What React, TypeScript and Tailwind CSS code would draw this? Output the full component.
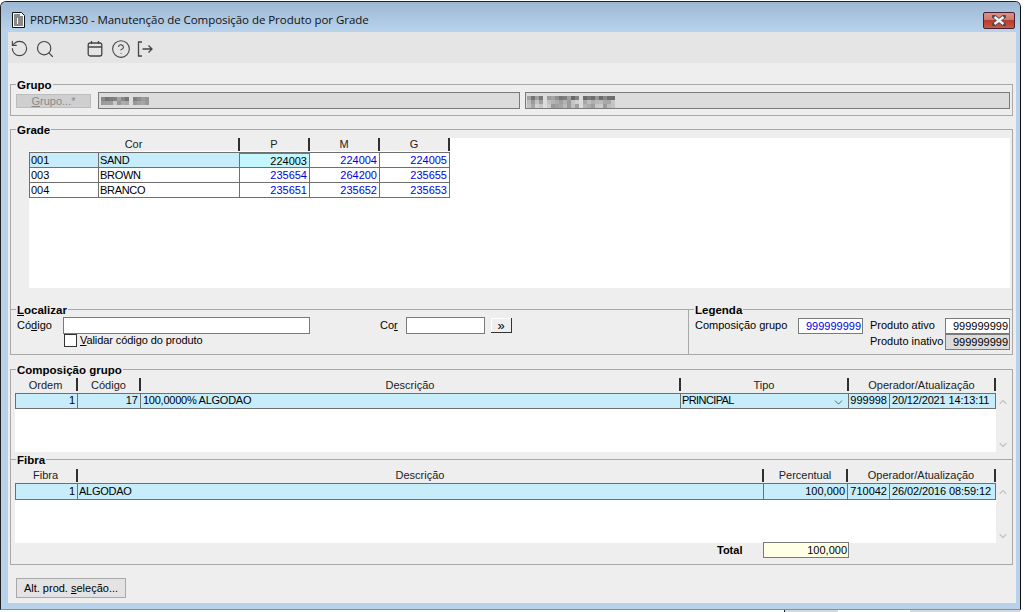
import React from "react";
import { RotateCcw, Search, CircleHelp, ChevronUp, ChevronDown } from "lucide-react";

const Legend = ({ children }: { children: React.ReactNode }) => (
  <span className="absolute top-[-6px] left-[5px] bg-[#eeeeee] px-[1px] font-bold text-[11.5px] leading-[13px] text-black">{children}</span>
);

const Head = ({ w, children, lh = "leading-[13px]" }: { w: string; children?: React.ReactNode; lh?: string }) => (
  <div className={`${w} h-[13px] shrink-0 border-r-2 border-[#303030] bg-[#eeeeee] text-center ${lh} text-[#222]`}>{children}</div>
);

const Cell = ({ w, children, right, className = "", lh = "leading-[13px]" }: { w: string; children?: React.ReactNode; right?: boolean; className?: string; lh?: string }) => (
  <div className={`${w} h-full shrink-0 border-r border-[#6f6f6f] ${lh} whitespace-nowrap overflow-hidden ${right ? "pr-[2px] text-right" : "pl-[1px] text-left"} ${className}`}>{children}</div>
);

const Blur = ({ w, h, seed }: { w: number; h: number; seed: number }) => {
  const cols = Math.floor(w / 4);
  const rows = Math.floor(h / 4);
  const rects = [];
  for (let r = 0; r < rows; r++) {
    for (let c = 0; c < cols; c++) {
      const v = (Math.sin((c + 1) * 12.9 + (r + 1) * 78.2 + seed) * 43758.5) % 1;
      const t = Math.abs(v);
      const g = Math.round((r === 0 ? 105 : 150) + t * 60);
      if ((c + seed) % 9 !== 8)
        rects.push(<rect key={`${r}-${c}`} x={c * 4} y={r * 4} width="4" height="4" fill={`rgb(${g},${g},${g})`} />);
    }
  }
  return <svg width={w} height={h} className="block">{rects}</svg>;
};

const DocIcon = () => (
  <svg width="16" height="16" viewBox="0 0 16 16" className="block">
    <path d="M1.500 0.500h9l3 3v12h-12z" fill="#fff" stroke="#111" />
    <path d="M3 3h6M3 5h9M3 7h3M7 7h5M3 9h3M7 9h5M3 11h3M7 11h5M3 13h9" stroke="#111" strokeWidth="1" />
  </svg>
);

const CloseBtn = () => (
  <div className="flex h-[17px] w-[32px] items-center justify-center rounded-[2px] border border-[#4a2030] bg-[linear-gradient(#d9928a_0%,#cf7a6d_45%,#b93c28_50%,#c4594a_100%)]">
    <svg width="14" height="11" viewBox="0 0 14 11">
      <path d="M2 1.500 L12 9.500 M12 1.500 L2 9.500" stroke="#4b4b55" strokeWidth="4" strokeLinecap="square" />
      <path d="M2.500 2 L11.500 9 M11.500 2 L2.500 9" stroke="#f2f2f2" strokeWidth="2.400" />
    </svg>
  </div>
);

const CalendarIcon = () => (
  <svg width="18" height="18" viewBox="0 0 18 18" fill="none" stroke="#444" strokeWidth="1.300" className="block">
    <rect x="2.200" y="3" width="13.600" height="13" rx="2" />
    <path d="M2.200 7h13.600M5.500 1v3M12.500 1v3" />
  </svg>
);

const ExitIcon = () => (
  <svg width="18" height="18" viewBox="0 0 18 18" fill="none" stroke="#444" strokeWidth="1.300" className="block">
    <path d="M6 2H2.500v14H6" />
    <path d="M6.500 9H16M12.500 5.500 16 9l-3.500 3.500" />
  </svg>
);

const Input = ({ className = "", children }: { className?: string; children?: React.ReactNode }) => (
  <div className={`shrink-0 border border-[#7a7a7a] leading-[14px] ${className}`}>{children}</div>
);

const Scroll = () => (
  <div className="flex h-full w-[13px] shrink-0 flex-col items-center justify-between pt-[3px] pb-[1px] text-[#c4c4c4]">
    <ChevronUp size={12} strokeWidth={2.4} />
    <ChevronDown size={12} strokeWidth={2.4} />
  </div>
);

export default function App() {
  return (
    <div className="flex h-[612px] w-[1025px] flex-col overflow-hidden bg-white font-['Liberation_Sans',Arial,sans-serif] text-[11px] text-black">
      <div className="mt-[1px] h-[609px] w-[1021px] shrink-0 rounded-t-[6px] border border-[#222] border-b-[#10c0e0] border-r-[#111] bg-[#b8d2eb]">
        <div className="flex h-full flex-col">
          <div className="flex h-[30px] shrink-0 items-start rounded-t-[5px] bg-[linear-gradient(#9db8d3,#b9d3ec)] pt-[10px] pr-[5px] pl-[10px]">
            <DocIcon />
            <span className="ml-[3px] font-['Open_Sans',sans-serif] text-[11.5px] leading-[16px] tracking-[-0.05px] text-[#111]">PRDFM330 - Manutenção de Composição de Produto por Grade</span>
            <div className="ml-auto"><CloseBtn /></div>
          </div>

          <div className="mr-[4px] ml-[7px] flex min-h-0 flex-1 flex-col bg-[#eeeeee]">
            <div className="flex h-[31px] shrink-0 items-center bg-[#e5e5e5] pt-[2px] pl-[2px] text-[#444]">
              <RotateCcw size={19} strokeWidth={1.4} />
              <Search size={20} strokeWidth={1.4} className="ml-[6px]" />
              <div className="ml-[31px]"><CalendarIcon /></div>
              <CircleHelp size={20} strokeWidth={1.3} className="ml-[7px]" />
              <div className="ml-[5px]"><ExitIcon /></div>
            </div>

            {/* Grupo */}
            <div className="relative mt-[21px] ml-[2px] flex h-[32px] w-[1003px] shrink-0 items-start border border-[#a8a8a8] pt-[7px] pl-[5px]">
              <Legend>Grupo</Legend>
              <div className="mt-[2px] flex h-[14px] w-[75px] shrink-0 items-center justify-center bg-[#cfcfcf] text-[#8a8a8a] shadow-[inset_0_0_0_1px_#bdbdbd]"><span><u>G</u>rupo...*</span></div>
              <div className="ml-[7px] flex h-[17px] w-[422px] shrink-0 items-center border border-[#7a7a7a] bg-[#dcdcdc] pl-[2px]"><Blur w={48} h={8} seed={1} /></div>
              <div className="ml-[5px] flex h-[17px] w-[485px] shrink-0 items-start border border-[#7a7a7a] bg-[#dcdcdc] pt-[3px] pl-[1px]"><Blur w={88} h={12} seed={4} /></div>
            </div>

            {/* Grade */}
            <div className="relative mt-[13px] ml-[2px] h-[180px] w-[1003px] shrink-0 border-x border-t border-[#a8a8a8] pt-[8px] pr-[1px] pl-[18px]">
              <Legend>Grade</Legend>
              <div className="mr-[1px] h-[150px] bg-white">
                <div className="flex h-[14px]">
                  <Head w="w-[211px]">Cor</Head>
                  <Head w="w-[70px]">P</Head>
                  <Head w="w-[70px]">M</Head>
                  <Head w="w-[70px]">G</Head>
                </div>
                <div className="w-[421px] border border-b-0 border-[#6f6f6f]">
                  {[
                    ["001", "SAND", "224003", "224004", "224005"],
                    ["003", "BROWN", "235654", "264200", "235655"],
                    ["004", "BRANCO", "235651", "235652", "235653"],
                  ].map((r, i) => (
                    <div key={r[0]} className={`flex h-[15px] border-b border-[#6f6f6f] ${i === 0 ? "bg-[#c7edfb]" : ""}`}>
                      <Cell w="w-[69px]" lh="leading-[15px]">{r[0]}</Cell>
                      <Cell w="w-[141px]" lh="leading-[15px]" className="tracking-[-0.3px]">{r[1]}</Cell>
                      <Cell w="w-[70px]" right lh={i === 0 ? "leading-[14px]" : "leading-[15px]"} className={i === 0 ? "border-t border-t-[#1d8fe0] bg-[#c3f7fd] text-black" : "text-[#0000e0]"}>{r[2]}</Cell>
                      <Cell w="w-[70px]" right lh="leading-[15px]" className={i === 0 ? "bg-white text-[#0000e0]" : "text-[#0000e0]"}>{r[3]}</Cell>
                      <Cell w="w-[69px]" right lh="leading-[15px]" className={`border-r-0 ${i === 0 ? "bg-white text-[#0000e0]" : "text-[#0000e0]"}`}>{r[4]}</Cell>
                    </div>
                  ))}
                </div>
              </div>
            </div>

            {/* Localizar + Legenda */}
            <div className="ml-[2px] flex h-[46px] w-[1003px] shrink-0 border border-[#a8a8a8]">
              <div className="relative w-[678px] shrink-0 border-r border-[#a8a8a8] pt-[7px]">
                <Legend><u>L</u>ocalizar</Legend>
                <div className="flex h-[17px] items-center">
                  <span className="ml-[6px] w-[46px] shrink-0">Có<u>d</u>igo</span>
                  <Input className="h-[17px] w-[247px] bg-white" />
                  <span className="ml-[70px] w-[26px] shrink-0">Co<u>r</u></span>
                  <Input className="h-[17px] w-[79px] bg-white" />
                  <div className="ml-[6px] flex h-[15px] w-[21px] shrink-0 items-center justify-center border-r border-b border-[#333] bg-[#eeeeee] text-[13px] leading-none shadow-[inset_1px_1px_0_#fff]">»</div>
                </div>
                <div className="ml-[53px] flex h-[13px] items-center">
                  <div className="h-[13px] w-[13px] shrink-0 border border-[#333] bg-white" />
                  <span className="ml-[3px] tracking-[-0.08px]"><u>V</u>alidar código do produto</span>
                </div>
              </div>
              <div className="relative min-w-0 flex-1 pt-[8px]">
                <Legend>Legenda</Legend>
                <div className="flex h-[16px] items-center">
                  <span className="ml-[6px] w-[103px] shrink-0 pb-[2px]">Composição grupo</span>
                  <Input className="h-[16px] w-[65px] bg-white pr-[1px] text-right text-[#0000e0]">999999999</Input>
                  <span className="ml-[7px] w-[75px] shrink-0 pb-[2px]">Produto ativo</span>
                  <Input className="h-[16px] w-[65px] bg-white pr-[1px] text-right">999999999</Input>
                </div>
                <div className="flex h-[15px] items-center">
                  <span className="ml-[181px] w-[75px] shrink-0">Produto inativo</span>
                  <Input className="h-[16px] w-[65px] bg-[#dcdcdc] pr-[1px] text-right">999999999</Input>
                </div>
              </div>
            </div>

            {/* Composição grupo + Fibra */}
            <div className="relative mt-[14px] ml-[2px] h-[196px] w-[1003px] shrink-0 border border-[#a8a8a8] pt-[8px] pl-[4px]">
              <Legend>Composição grupo</Legend>
              <div className="flex h-[15px]">
                <Head w="w-[63px]" lh="leading-[15px]">Ordem</Head>
                <Head w="w-[63px]" lh="leading-[15px]">Código</Head>
                <Head w="w-[540px]" lh="leading-[15px]">Descrição</Head>
                <Head w="w-[168px]" lh="leading-[15px]">Tipo</Head>
                <Head w="w-[147px]" lh="leading-[15px]">Operador/Atualização</Head>
              </div>
              <div className="flex h-[59px] w-[994px]">
                <div className="h-full w-[981px] bg-white">
                  <div className="flex h-[16px] border border-[#6f6f6f] bg-[#c7edfb]">
                    <Cell w="w-[62px]" right>1</Cell>
                    <Cell w="w-[63px]" right>17</Cell>
                    <Cell w="w-[540px]" className="pl-[2px] tracking-[-0.25px]">100,0000% ALGODAO</Cell>
                    <Cell w="w-[168px]" className="relative pl-[1px] tracking-[-0.6px]">PRINCIPAL<ChevronDown size={13} strokeWidth={1.3} className="absolute top-[2px] right-[3px] text-[#333]" /></Cell>
                    <Cell w="w-[41px]" right>999998</Cell>
                    <Cell w="w-[105px]" className="border-r-0 pl-[2px] tracking-[-0.15px]">20/12/2021 14:13:11</Cell>
                  </div>
                </div>
                <Scroll />
              </div>

              <div className="relative mt-[7px] -ml-[4px] border-t border-[#a8a8a8] pt-[9px] pl-[4px]">
                <Legend>Fibra</Legend>
                <div className="flex h-[14px]">
                  <Head w="w-[63px]">Fibra</Head>
                  <Head w="w-[686px]">Descrição</Head>
                  <Head w="w-[84px]">Percentual</Head>
                  <Head w="w-[148px]">Operador/Atualização</Head>
                </div>
                <div className="flex h-[60px] w-[994px]">
                  <div className="h-full w-[981px] bg-white">
                    <div className="flex h-[17px] border border-[#6f6f6f] bg-[#c7edfb]">
                      <Cell w="w-[62px]" right lh="leading-[15px]">1</Cell>
                      <Cell w="w-[686px]" lh="leading-[15px]" className="tracking-[-0.25px]">ALGODAO</Cell>
                      <Cell w="w-[84px]" right lh="leading-[15px]">100,000</Cell>
                      <Cell w="w-[42px]" right lh="leading-[15px]">710042</Cell>
                      <Cell w="w-[105px]" lh="leading-[15px]" className="border-r-0 pl-[2px] tracking-[-0.1px]">26/02/2016 08:59:12</Cell>
                    </div>
                  </div>
                  <Scroll />
                </div>
                <div className="-mt-[1px] flex h-[16px] items-center">
                  <span className="ml-[702px] w-[46px] shrink-0 text-[11px] font-bold">Total</span>
                  <Input className="h-[16px] w-[86px] bg-[#ffffe6] pr-[1px] text-right">100,000</Input>
                </div>
              </div>
            </div>

            <div className="mt-[13px] ml-[8px] flex h-[20px] w-[110px] shrink-0 items-center justify-center border border-[#a8a8a8] bg-[#e3e3e3]">
              <span>Alt. prod. <u>s</u>eleção...</span>
            </div>
          </div>
          <div className="h-[6px] shrink-0" />
        </div>
      </div>
      <div className="flex h-[2px] shrink-0 bg-white pl-[784px]">
        <div className="h-full w-[1px] bg-[#222]" />
        <div className="h-full w-[53px] bg-[#d8d8d8]" />
        <div className="ml-[72px] h-full w-[110px] bg-[#d8d8d8]" />
      </div>
    </div>
  );
}
